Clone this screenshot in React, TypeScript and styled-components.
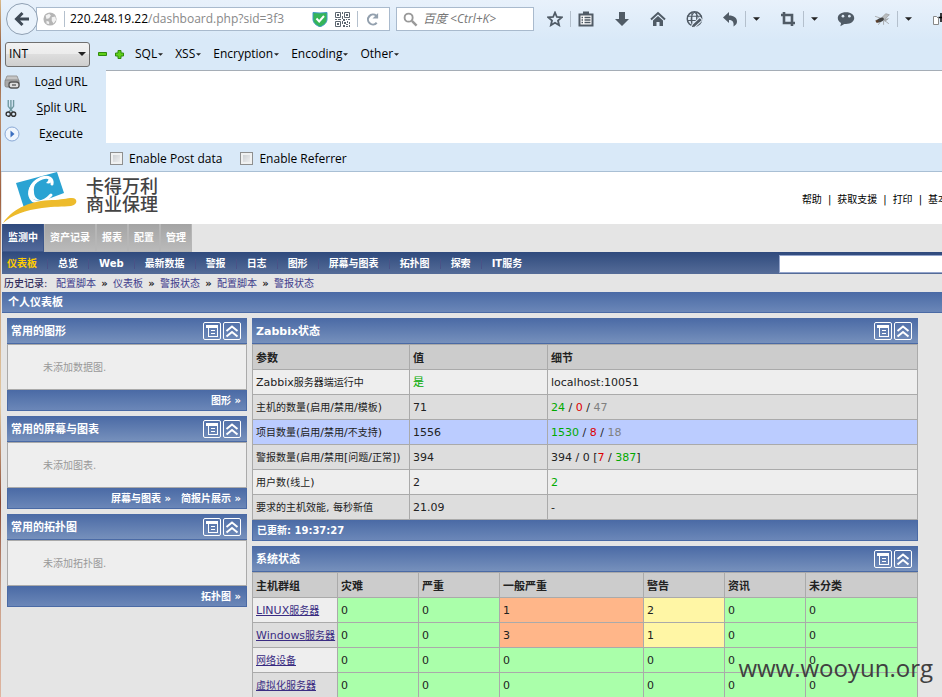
import React from "react";
import styled, { createGlobalStyle, css } from "styled-components";

const UI = `"Open Sans", "Noto Sans CJK SC", sans-serif`;
const PAGE = `"DejaVu Sans", "Noto Sans CJK SC", sans-serif`;
const BLUE = "linear-gradient(#4a6aa5, #6b87b8)";

const Global = createGlobalStyle`
  * { box-sizing: border-box; }
  html, body { margin: 0; height: 100%; overflow: hidden; }
  body { background: #e5e5e5; font: 10px/14px ${PAGE}; color: #000; }
  button { font: inherit; color: inherit; border: 0; background: none; padding: 0; }
  a { color: inherit; text-decoration: none; }
`;

const Window = styled.div`
  position: relative;
  min-height: 100vh;
  padding-left: 1px;
  background: linear-gradient(#d9b98a, #8b5236 8%, #b98d6b 16%, #a0603f 28%, #c49a78 38%, #e3c9a2 58%, #8a4a35 72%, #caa089 85%, #dfb5a0);
`;
const Chrome = styled.header`
  background: linear-gradient(#e8f1fb, #d9e9f8 40px);
  border-bottom: 1px solid #a9bfd4;
  font: 12px/18px ${UI};
  height: 172px;
`;
const NavBar = styled.div`
  display: flex;
  align-items: center;
  height: 38px;
  padding-left: 5px;
  overflow: hidden;
`;
const BackButton = styled.button`
  flex: none;
  width: 32px;
  height: 32px;
  border-radius: 50%;
  border: 1px solid #8fa0b3;
  background: #e9f2fb;
  display: grid;
  place-items: center;
  z-index: 1;
`;
const Field = styled.div`
  display: flex;
  align-items: center;
  height: 24px;
  background: #fff;
  border: 1px solid #a9bacd;
`;
const UrlField = styled(Field)`
  flex: 1;
  min-width: 0;
  margin-left: -2px;
  padding: 0 9px 0 6px;
  gap: 7px;
`;
const UrlText = styled.div`
  flex: 1;
  min-width: 0;
  overflow: hidden;
  white-space: nowrap;
  color: #888;
  margin: 0 17px 0 -2px;
  b { font-weight: 400; color: #000; }
`;
const SearchField = styled(Field)`
  flex: none;
  width: 138px;
  margin-left: 6px;
  padding-left: 6px;
  gap: 5px;
  input {
    flex: 1;
    min-width: 0;
    border: 0;
    outline: 0;
    padding: 0;
    background: none;
    font: italic 12px/18px ${UI};
  }
  input::placeholder { color: #777; opacity: 1; }
`;
const Divider = styled.span<{ $tall?: boolean }>`
  flex: none;
  width: 1px;
  height: 16px;
  background: #b4c0cd;
  margin-left: ${(p) => (p.$tall ? 5 : 0)}px;
`;
const Tool = styled.button<{ $gap?: number; $w?: number }>`
  flex: none;
  display: grid;
  place-items: center;
  overflow: hidden;
  width: ${(p) => p.$w ?? 20}px;
  height: 20px;
  margin-left: ${(p) => p.$gap ?? 16}px;
`;
const HackMenu = styled.div`
  display: flex;
  align-items: center;
  height: 32px;
  padding-left: 4px;
`;
const SelectBox = styled.div`
  position: relative;
  width: 85px;
  height: 25px;
  margin-right: 8px;
  select {
    appearance: none;
    width: 100%;
    height: 100%;
    padding: 0 3px;
    border: 1px solid #707070;
    border-radius: 3px;
    background: linear-gradient(#f2f2f2, #ebebeb 50%, #dddddd 50%, #cfcfcf);
    font: 12px/18px ${UI};
    color: #000;
  }
  svg { position: absolute; right: 4px; top: 10px; pointer-events: none; }
`;
const SignButton = styled.button`
  display: grid;
  place-items: center;
  width: 9px;
  height: 9px;
  margin-right: 8px;
`;
const MenuButton = styled.button`
  display: flex;
  align-items: center;
  gap: 1px;
`;
const Menus = styled.div`
  display: flex;
  gap: 12px;
  margin-left: 3px;
`;
const HackBody = styled.div`
  display: grid;
  grid-template-columns: 105px 1fr;
`;
const Actions = styled.div`
  display: flex;
  flex-direction: column;
  margin-top: -1px;
`;
const Action = styled.button`
  display: flex;
  align-items: center;
  height: 26px;
  padding-left: 3px;
  svg { flex: none; }
  span { flex: 1; text-align: center; padding-right: 4px; }
  u { text-underline-offset: 2px; }
`;
const UrlArea = styled.textarea`
  display: block;
  width: 100%;
  height: 73px;
  resize: none;
  border: 0;
  border-top: 1px solid #a5adb6;
  border-radius: 0;
  outline: 0;
  background: #fff;
`;
const Checks = styled.div`
  display: flex;
  align-items: center;
  height: 31px;
  padding-left: 4px;
  gap: 18px;
`;
const Check = styled.label`
  display: flex;
  align-items: center;
  gap: 6px;
  input {
    appearance: none;
    margin: 0;
    width: 13px;
    height: 13px;
    border: 1px solid #8e8f8f;
    background: linear-gradient(135deg, #c4c8cc, #f6f6f6);
    box-shadow: inset 0 0 0 2px #f0f1f1;
  }
`;

const Page = styled.main`
  background: #e5e5e5;
  padding-left: 1px;
`;
const Brand = styled.div`
  display: flex;
  align-items: center;
  height: 52px;
  background: #fff;
  overflow: hidden;
`;
const BrandText = styled.div`
  font-size: 18px;
  line-height: 18px;
  font-weight: 500;
  color: #444;
  margin-left: 8px;
  padding-bottom: 4px;
`;
const TopLinks = styled.nav`
  display: flex;
  gap: 6px;
  margin: 0 -6px 0 auto;
  padding-top: 4px;
`;
const Tabs = styled.nav`
  display: flex;
  height: 28px;
`;
const Tab = styled.a<{ $on?: boolean }>`
  padding: 0 5px;
  line-height: 28px;
  font-weight: 700;
  color: #fff;
  border: 1px solid #b6b6b6;
  border-width: 0 1px 1px;
  background: linear-gradient(#a4a4a4, #bababa);
  ${(p) => p.$on && css`
    background: linear-gradient(#2f4a7d, #52699a);
    border-color: #3d578a;
  `}
`;
const SubNav = styled.div`
  display: flex;
  align-items: center;
  height: 22px;
  background: linear-gradient(#2f4a7d, #556c98);
  padding: 2px 0 0 5px;
  overflow: hidden;
`;
const SubLink = styled.a<{ $on?: boolean }>`
  flex: none;
  font-weight: 700;
  color: ${(p) => (p.$on ? "#ffcc00" : "#fff")};
  &:not(:first-child)::before {
    content: "";
    display: inline-block;
    width: 1px;
    height: 10px;
    margin: 0 10px;
    vertical-align: -2px;
    background: #4a5287;
  }
`;
const NavSearch = styled.input`
  width: 163px;
  height: 18px;
  margin-left: auto;
  padding: 0 3px;
  border: 1px solid #94a5cc;
  border-right: 0;
  background: #fff;
  outline: 0;
`;
const History = styled.nav`
  display: flex;
  align-items: center;
  height: 18px;
  padding: 2px 0 0 2px;
  color: #332f5e;
  b { width: 52px; font-weight: 500; }
  i { font-style: normal; font-weight: 700; width: 17px; text-align: center; color: #222; }
  a { color: #403c8c; }
`;
const PageTitle = styled.h1`
  margin: 0;
  height: 21px;
  padding: 1px 0 0 6px;
  font-size: 11px;
  line-height: 20px;
  color: #fff;
  background: ${BLUE};
  border-bottom: 1px solid #4a6aa5;
`;
const Columns = styled.div`
  display: grid;
  grid-template-columns: 240px 1fr;
  gap: 5px;
  padding: 5px 24px 0 5px;
  align-items: start;
`;
const Column = styled.div`
  display: grid;
  gap: 5px;
  min-width: 0;
`;
const PanelHead = styled.header`
  display: flex;
  align-items: center;
  gap: 2px;
  height: 26px;
  padding: 0 6px 0 4px;
  color: #fff;
  background: linear-gradient(#4a6aa5, #7690bc);
  border-bottom: 1px solid #4a6aa5;
  h2 { flex: 1; margin: 0; padding-top: 3px; font-size: 11px; line-height: 16px; }
`;
const PanelBody = styled.div`
  height: 46px;
  padding-left: 35px;
  line-height: 46px;
  color: #999;
  background: #eee;
  border: 1px solid #aaa;
`;
const PanelFoot = styled.footer<{ $left?: boolean }>`
  display: flex;
  justify-content: ${(p) => (p.$left ? "flex-start" : "flex-end")};
  align-items: center;
  gap: 10px;
  height: 21px;
  padding: 2px 5px 0 4px;
  color: #fff;
  font-weight: 700;
  background: ${BLUE};
  border: 1px solid #4a6aa5;
  border-width: 0 1px 1px;
`;
const SquareButton = styled.button`
  display: grid;
  place-items: center;
  width: 18px;
  height: 18px;
  border: 1px solid #fff;
  border-radius: 2px;
`;
const Table = styled.table`
  width: 100%;
  table-layout: fixed;
  border-collapse: separate;
  border-spacing: 0;
  border: 1px solid #aaa;
  border-width: 1px 0 0 1px;
  color: #222;
  th, td {
    height: 25px;
    padding: 2px 3px 0;
    text-align: left;
    white-space: nowrap;
    border: 1px solid #aaa;
    border-width: 0 1px 1px 0;
    font-size: 11px;
    line-height: 16px;
  }
  thead th { background: #ccc; padding-top: 4px; }
  tbody th { font-size: 10px; font-weight: 400; }
`;
const Row = styled.tr<{ $bg: string }>`
  background: ${(p) => p.$bg};
`;
const Cell = styled.td<{ $bg: string }>`
  background: ${(p) => p.$bg};
`;
const Latin = styled.span`
  font-size: 11px;
`;
const Tone = styled.span<{ $c: "green" | "red" | "gray" }>`
  color: ${(p) => ({ green: "#00aa00", red: "#dd0000", gray: "#808080" })[p.$c]};
`;
const GroupLink = styled.a`
  color: #3a2c82;
  text-decoration: underline;
`;
const Watermark = styled.div`
  position: absolute;
  right: 9px;
  top: 651px;
  font: 24px/34px ${UI};
  color: #404040;
`;

const INK = "#505b66";
const Svg = ({ s = 16, children }: { s?: number; children: React.ReactNode }) => (
  <svg width={s} height={s} viewBox="0 0 16 16" fill="none" aria-hidden="true">{children}</svg>
);
const Caret = ({ w = 7 }: { w?: number }) => (
  <svg width={w} height={w > 5 ? 4 : 3} viewBox="0 0 8 4" aria-hidden="true"><path d="M0 0h8L4 4z" fill="#222" /></svg>
);

const Logo = () => (
  <svg width="76" height="52" viewBox="0 0 76 52" aria-hidden="true">
    <path d="M14 11 55 0 62 21 22 36z" fill="#2aa3d3" />
    <path d="M50 12c1-6-4-8-10-6-8 3-14 11-12 18 2 8 13 8 21-1" fill="none" stroke="#fff" strokeWidth="3" strokeLinecap="round" />
    <path d="M42 5c-7 2-11 8-10 15 0 4 2 7 6 8-7 1-11-3-11-9 0-7 7-13 15-14z" fill="#fff" />
    <path d="M44 11c3 1 6 0 6-3 0-2-2-3-4-2 1 2 0 3-2 5z" fill="#fff" />
    <path d="M1 51C12 35 30 29 50 28c9 0 15-2 20-2 6 0 6 7-1 8-9 1-16 0-29 2C24 38 10 43 1 51z" fill="#edbb2c" />
  </svg>
);

const Qr = () => (
  <svg width="15" height="15" viewBox="0 0 15 15" aria-hidden="true">
    <path d="M.5.5h5v5h-5zM9.500.5h5v5h-5zM.5 9.500h5v5h-5z" fill="none" stroke="#5c6670" />
    <path d="M2 2h2v2H2zM11 2h2v2h-2zM2 11h2v2H2zM7 0h1v2H7zM7 4h1v3H7zM0 7h2v1H0zM3 7h3v1H3zM8 7h2v2H8zM11 7h1v1h-1zM13 7h2v1h-2zM7 9h1v3H7zM9 10h2v2H9zM12 9h1v2h-1zM14 10h1v2h-1zM8 13h2v2H8zM11 12h2v1h-2zM11 14h2v1h-2zM14 13h1v2h-1z" fill="#5c6670" />
  </svg>
);

const Star = () => <Svg><path d="M8 1.600 9.900 6l4.700.4-3.600 3.100 1.100 4.700L8 11.700l-4.100 2.500L5 9.500 1.400 6.400 6.100 6z" stroke={INK} strokeWidth="1.800" /></Svg>;
const Clip = () => <Svg><path d="M1.500 3.500h13v11h-13z" fill="#fff" stroke={INK} strokeWidth="2" /><path d="M5 .5h6V4H5z" fill={INK} /><path d="M3.500 6.500H5M6.500 6.500h6M3.500 9H5M6.500 9h6M3.500 11.500H5M6.500 11.500h6" stroke={INK} strokeWidth="1.300" /></Svg>;
const Down = () => <Svg><path d="M5 1h6v7h4l-7 7-7-7h4z" fill={INK} /></Svg>;
const Home = () => <Svg><path d="M1 8.500 8 2l7 6.500" stroke={INK} strokeWidth="2" /><path d="M3 9.500 8 5l5 4.500V15H9.500v-4h-3v4H3z" fill={INK} /></Svg>;
const Globe = () => (
  <Svg s={17}><circle cx="8" cy="7.500" r="6.800" stroke={INK} strokeWidth="1.400" />
    <path d="M1 5h14M1 9h14M5.500 1v13M10 1v12M8 1C4 4 4 11 7 14M8 1c4 3 4 6 3 9" stroke={INK} />
    <path d="M4.500 16 6 12.500 13 6l2.500 2.500-7 6.500z" fill={INK} stroke="#e2edf9" /></Svg>
);
const Undo = () => <Svg><path d="M1 6.500 7 1v3.500c5 0 8 2.500 8 6 0 2-1 3.500-3.500 5C12 11.500 11 9 7 9v3z" fill={INK} /></Svg>;
const Crop = () => <Svg><path d="M4 1v11h11M1 4h11v11" stroke={INK} strokeWidth="2.600" /></Svg>;
const Chat = () => <Svg s={18}><path d="M8 2c4.500 0 7.300 2.200 7.300 5.200S12.500 12.500 8 12.500l-1.500-.1L3 14.500l.6-3C1.700 10.500.7 9 .7 7.200.7 4.200 3.500 2 8 2z" fill={INK} /><circle cx="5.300" cy="5.500" r="1.200" fill="#dce8f4" /><circle cx="11" cy="5.500" r="1.200" fill="#dce8f4" /></Svg>;
const Fly = () => (
  <Svg s={17}>
    <path d="M1 5l6 2M1 9l4-1M4 13l3-4M9 13V9M14 12l-4-3M13 8h-3" stroke="#999" strokeWidth=".7" />
    <path d="M6.500 7 11 2.500l3.500 1L10 8z" fill="#b9bcbe" stroke="#888" strokeWidth=".5" />
    <path d="m8 8 6.500-1.500-4 3.500z" fill="#a5a8aa" />
    <ellipse cx="6" cy="8.500" rx="3.500" ry="1.800" transform="rotate(-25 6 8.500)" fill="#444" />
    <circle cx="3" cy="9.800" r="1.300" fill="#5b3f2a" />
  </Svg>
);
const Doc = () => <svg width="12" height="16" viewBox="0 0 12 16" fill="none" aria-hidden="true"><path d="M3.500 5.500h3l2 2v6h-5z" fill="#fff" stroke="#888" /><path d="M11 2v9M8.500 6.500H12" stroke="#000" strokeWidth="1.500" /></svg>;

const PanelButtons = () => (
  <>
    <SquareButton aria-label="菜单">
      <svg width="16" height="16" viewBox="0 0 16 16" shapeRendering="crispEdges" aria-hidden="true">
        <path d="M2 2h12v3H2zM4 5h1v9H4zM13 5h1v9h-1zM4 13h10v1H4zM7 7h4v1H7zM7 10h4v1H7z" fill="#fff" />
      </svg>
    </SquareButton>
    <SquareButton aria-label="折叠">
      <svg width="16" height="16" viewBox="0 0 16 16" aria-hidden="true">
        <path d="M2.500 8 8 3.500 13.500 8M2.500 13.500 8 9l5.500 4.500" fill="none" stroke="#fff" strokeWidth="2" />
      </svg>
    </SquareButton>
  </>
);

/* Non-CJK runs are set one pixel larger than the Chinese glyphs beside them. */
const Label = ({ text }: { text: string }) => (
  <>
    {text.split(/([\x20-\x7e]+)/).filter(Boolean).map((part, i) =>
      /^[\x20-\x7e]/.test(part) ? <Latin key={i}>{part}</Latin> : part,
    )}
  </>
);

const widgets = [
  { title: "常用的图形", empty: "未添加数据图.", links: ["图形"] },
  { title: "常用的屏幕与图表", empty: "未添加图表.", links: ["屏幕与图表", "简报片展示"] },
  { title: "常用的拓扑图", empty: "未添加拓扑图.", links: ["拓扑图"] },
];

const G = ({ children }: { children: React.ReactNode }) => <Tone $c="green">{children}</Tone>;
const R = ({ children }: { children: React.ReactNode }) => <Tone $c="red">{children}</Tone>;
const D = ({ children }: { children: React.ReactNode }) => <Tone $c="gray">{children}</Tone>;

const LIGHT = "#eeeeee";
const DARK = "#dddddd";
const status: { name: string; value: React.ReactNode; detail: React.ReactNode; bg: string }[] = [
  { name: "Zabbix服务器端运行中", value: <G>是</G>, detail: "localhost:10051", bg: LIGHT },
  { name: "主机的数量(启用/禁用/模板)", value: "71", detail: <><G>24</G> / <R>0</R> / <D>47</D></>, bg: DARK },
  { name: "项目数量(启用/禁用/不支持)", value: "1556", detail: <><G>1530</G> / <R>8</R> / <D>18</D></>, bg: "#bbccff" },
  { name: "警报数量(启用/禁用[问题/正常])", value: "394", detail: <>394 / 0 [<R>7</R> / <G>387</G>]</>, bg: DARK },
  { name: "用户数(线上)", value: "2", detail: <G>2</G>, bg: LIGHT },
  { name: "要求的主机效能, 每秒新值", value: "21.09", detail: "-", bg: DARK },
];

const severities = ["灾难", "严重", "一般严重", "警告", "资讯", "未分类"];
const groups = [
  { name: "LINUX服务器", counts: [0, 0, 1, 2, 0, 0] },
  { name: "Windows服务器", counts: [0, 0, 3, 1, 0, 0] },
  { name: "网络设备", counts: [0, 0, 0, 0, 0, 0] },
  { name: "虚拟化服务器", counts: [0, 0, 0, 0, 0, 0] },
];
const countColor = (n: number, i: number) => (n === 0 ? "#aaffaa" : i === 2 ? "#ffb689" : "#fff6a5");

const trail = ["配置脚本", "仪表板", "警报状态", "配置脚本", "警报状态"];

export default function App() {
  return (
    <Window>
      <Global />
      <Chrome>
        <NavBar>
          <BackButton aria-label="Back"><Svg><path d="M8.500 2 2.500 8l6 6M3 8h12" stroke="#3f4a56" strokeWidth="3" /></Svg></BackButton>
          <UrlField>
            <Svg s={14}><circle cx="8" cy="8" r="7.500" fill="#b5b5b5" /><path d="M3 4l4-2 2 2-2 3-3 1zM10 6l4-1 1 4-3 4-2-3zM4 10l3 1v3l-3-1z" fill="#f2f2f2" /></Svg>
            <Divider />
            <UrlText><b>220.248.19.22</b>/dashboard.php?sid=3f3</UrlText>
            <Svg><path d="M1 1.500q7 1 14 0V8c0 4-3 6-7 8-4-2-7-4-7-8z" fill="#35b558" stroke="#3e98c4" /><path d="m4.500 7.500 2.700 3L12 5" stroke="#fff" strokeWidth="2" /></Svg>
            <Qr />
            <Divider />
            <Svg s={15}><path d="M12.500 11.500A5.300 5.300 0 1 1 12 4" stroke="#93a0ae" strokeWidth="2.200" /><path d="M14 1v6H8z" fill="#93a0ae" /></Svg>
          </UrlField>
          <SearchField>
            <Svg s={15}><circle cx="6" cy="6" r="4.300" stroke="#999" strokeWidth="2" /><path d="m9.500 9.500 5 5" stroke="#999" strokeWidth="2.600" /></Svg>
            <input aria-label="Search" placeholder="百度 <Ctrl+K>" />
          </SearchField>
          <Tool $gap={11} aria-label="Bookmark"><Star /></Tool>
          <Divider $tall />
          <Tool $gap={5} aria-label="Bookmarks list"><Clip /></Tool>
          <Tool aria-label="Downloads"><Down /></Tool>
          <Tool aria-label="Home"><Home /></Tool>
          <Tool aria-label="Web tools"><Globe /></Tool>
          <Tool aria-label="Undo"><Undo /></Tool>
          <Divider $tall />
          <Tool $gap={5} $w={11} aria-label="Undo options"><Caret /></Tool>
          <Tool aria-label="Crop"><Crop /></Tool>
          <Divider $tall />
          <Tool $gap={5} $w={11} aria-label="Crop options"><Caret /></Tool>
          <Tool aria-label="Chat"><Chat /></Tool>
          <Tool aria-label="Firebug"><Fly /></Tool>
          <Divider $tall />
          <Tool $gap={5} $w={11} aria-label="Firebug options"><Caret /></Tool>
          <Tool $w={12} aria-label="New page"><Doc /></Tool>
        </NavBar>
        <HackMenu>
          <SelectBox>
            <select aria-label="Type" defaultValue="INT"><option>INT</option></select>
            <Caret w={8} />
          </SelectBox>
          <SignButton aria-label="Remove"><svg width="9" height="9" viewBox="0 0 9 9"><path d="M.5 2.500h8v3h-8z" fill="#5fd01a" stroke="#2f8a0c" /></svg></SignButton>
          <SignButton aria-label="Add"><svg width="9" height="9" viewBox="0 0 9 9"><path d="M3 .5h3V3h2.500v3H6v2.500H3V6H.5V3H3z" fill="#5fd01a" stroke="#2f8a0c" /></svg></SignButton>
          <Menus>
            {["SQL", "XSS", "Encryption", "Encoding", "Other"].map((m) => (
              <MenuButton key={m}>{m}<Caret w={5} /></MenuButton>
            ))}
          </Menus>
        </HackMenu>
        <HackBody>
          <Actions>
            <Action>
              <Svg><path d="M3 2h10l2 5H1z" fill="#c4c4c4" stroke="#999" /><rect x="1" y="6" width="14" height="7" rx="1.500" fill="#a8a8a8" stroke="#888" /><rect x="5" y="8" width="10" height="6" rx="2.500" fill="#ddd" stroke="#555" strokeWidth="1.300" /><path d="M8 11h4" stroke="#555" strokeWidth="1.300" /></Svg>
              <span>Lo<u>a</u>d URL</span>
            </Action>
            <Action>
              <Svg s={17}><path d="M4 0v6l4.500 5.500M9 0v6l-4.500 5.500M6.500 0v8" stroke="#6f98a0" strokeWidth="1.300" /><circle cx="4" cy="13.300" r="2" stroke="#333" strokeWidth="1.300" /><circle cx="9" cy="13.300" r="2" stroke="#333" strokeWidth="1.300" /></Svg>
              <span><u>S</u>plit URL</span>
            </Action>
            <Action>
              <Svg><circle cx="8" cy="8" r="7" fill="#eef5fd" stroke="#8aa9d6" /><path d="M6.500 4.500 10.500 8l-4 3.500z" fill="#3b6fc0" /></Svg>
              <span>E<u>x</u>ecute</span>
            </Action>
          </Actions>
          <div>
            <UrlArea aria-label="URL" />
            <Checks>
              <Check><input type="checkbox" />Enable Post data</Check>
              <Check><input type="checkbox" />Enable Referrer</Check>
            </Checks>
          </div>
        </HackBody>
      </Chrome>

      <Page>
        <Brand>
          <Logo />
          <BrandText>卡得万利<br />商业保理</BrandText>
          <TopLinks>
            <a href="#help">帮助</a><span>|</span>
            <a href="#support">获取支援</a><span>|</span>
            <a href="#print">打印</a><span>|</span>
            <a href="#profile">基本</a>
          </TopLinks>
        </Brand>
        <Tabs>
          {["监测中", "资产记录", "报表", "配置", "管理"].map((t, i) => (
            <Tab key={t} href="#tab" $on={i === 0}>{t}</Tab>
          ))}
        </Tabs>
        <SubNav>
          {["仪表板", "总览", "Web", "最新数据", "警报", "日志", "图形", "屏幕与图表", "拓扑图", "探索", "IT服务"].map((t, i) => (
            <SubLink key={t} href="#nav" $on={i === 0}>{t}</SubLink>
          ))}
          <NavSearch aria-label="搜索" />
        </SubNav>
        <History>
          <b>历史记录:</b>
          {trail.map((t, i) => (
            <React.Fragment key={i}>{i > 0 && <i>»</i>}<a href="#history">{t}</a></React.Fragment>
          ))}
        </History>
        <PageTitle>个人仪表板</PageTitle>
        <Columns>
          <Column>
            {widgets.map((w) => (
              <section key={w.title}>
                <PanelHead><h2>{w.title}</h2><PanelButtons /></PanelHead>
                <PanelBody>{w.empty}</PanelBody>
                <PanelFoot>{w.links.map((l) => <a key={l} href="#more">{l} »</a>)}</PanelFoot>
              </section>
            ))}
          </Column>
          <Column>
            <section>
              <PanelHead><h2>Zabbix状态</h2><PanelButtons /></PanelHead>
              <Table>
                <colgroup><col width="157" /><col width="138" /><col /></colgroup>
                <thead><tr><th>参数</th><th>值</th><th>细节</th></tr></thead>
                <tbody>
                  {status.map((s) => (
                    <Row key={s.name} $bg={s.bg}><th scope="row"><Label text={s.name} /></th><td>{s.value}</td><td>{s.detail}</td></Row>
                  ))}
                </tbody>
              </Table>
              <PanelFoot $left>已更新: 19:37:27</PanelFoot>
            </section>
            <section>
              <PanelHead><h2>系统状态</h2><PanelButtons /></PanelHead>
              <Table>
                <colgroup><col width="85" /><col width="81" /><col width="81" /><col width="144" /><col width="81" /><col width="81" /><col /></colgroup>
                <thead><tr><th>主机群组</th>{severities.map((s) => <th key={s}>{s}</th>)}</tr></thead>
                <tbody>
                  {groups.map((g, r) => (
                    <Row key={g.name} $bg={r % 2 ? DARK : LIGHT}>
                      <th scope="row"><GroupLink href="#group"><Label text={g.name} /></GroupLink></th>
                      {g.counts.map((n, i) => <Cell key={i} $bg={countColor(n, i)}>{n}</Cell>)}
                    </Row>
                  ))}
                </tbody>
              </Table>
            </section>
          </Column>
        </Columns>
      </Page>
      <Watermark>www.wooyun.org</Watermark>
    </Window>
  );
}
